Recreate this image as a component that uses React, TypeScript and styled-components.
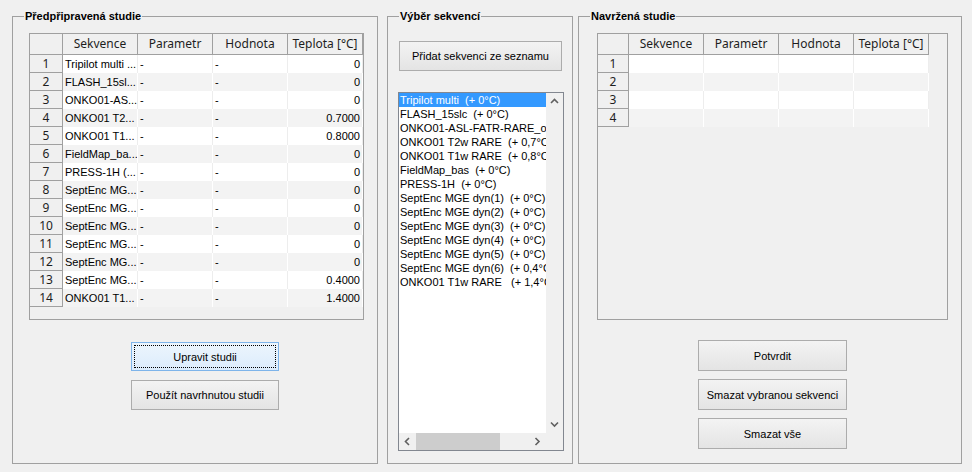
import React from 'react';
import styled, { createGlobalStyle, css } from 'styled-components';

// Základní styl okna (Windows 7 vzhled)
const GlobalStyle = createGlobalStyle`
  html, body {
    margin: 0;
    height: 100%;
    overflow: hidden;
  }
  body {
    background: #f0f0f0;
    font-family: "Liberation Sans", Arial, sans-serif;
    font-size: 11px;
    color: #000;
  }
`;

const Window = styled.div`
  display: flex;
  align-items: flex-start;
  padding: 9px 0 0 12px;
`;

const GroupBox = styled.fieldset<{ $width: number; $gap?: number }>`
  box-sizing: border-box;
  width: ${({ $width }) => $width}px;
  height: 455px;
  margin: 0 ${({ $gap }) => $gap ?? 0}px 0 0;
  padding: 0;
  min-width: 0;
  border: 1px solid #a0a0a0;
`;

const Legend = styled.legend`
  margin-left: 11px;
  padding: 0 1px;
  font-weight: bold;
  font-size: 11px;
  line-height: 14px;
`;

const Body = styled.div<{ $top: number; $left: number }>`
  display: flex;
  flex-direction: column;
  align-items: flex-start;
  padding: ${({ $top, $left }) => `${$top}px 0 0 ${$left}px`};
`;

const ButtonStack = styled.div<{ $top: number; $left: number; $gap: number }>`
  display: flex;
  flex-direction: column;
  gap: ${({ $gap }) => $gap}px;
  margin: ${({ $top, $left }) => `${$top}px 0 0 ${$left}px`};
`;

const Button = styled.button<{ $w: number; $h: number; $focused?: boolean }>`
  position: relative;
  box-sizing: border-box;
  width: ${({ $w }) => $w}px;
  height: ${({ $h }) => $h}px;
  padding: 0;
  border: 1px solid #acacac;
  border-radius: 0;
  background: linear-gradient(to bottom, #f3f3f3, #e4e4e4);
  font-family: "Liberation Sans", Arial, sans-serif;
  font-size: 11px;
  color: #000;
  ${({ $focused }) =>
    $focused &&
    css`
      border-color: #7eb4ea;
      background: linear-gradient(to bottom, #ecf5fd, #dcecfc);
      &::after {
        content: '';
        position: absolute;
        inset: 2px;
        border: 1px dotted #000;
      }
    `}
`;

// ---------- tabulka ----------

const Table = styled.div<{ $w: number }>`
  box-sizing: border-box;
  width: ${({ $w }) => $w}px;
  height: 287px;
  border: 1px solid #a0a0a0;
  background: #f0f0f0;
  overflow: hidden;
`;

const Row = styled.div`
  display: flex;
`;

const HeadCell = styled.div<{ $w: number }>`
  box-sizing: border-box;
  width: ${({ $w }) => $w}px;
  height: 21px;
  line-height: 20px;
  border-right: 1px solid #a0a0a0;
  border-bottom: 1px solid #a0a0a0;
  text-align: center;
  font-family: "Noto Sans", "Liberation Sans", sans-serif;
  font-size: 12px;
  color: #1e1e1e;
  white-space: nowrap;
`;

const RowHead = styled.div<{ $w: number }>`
  box-sizing: border-box;
  width: ${({ $w }) => $w}px;
  height: 18px;
  line-height: 18px;
  border-right: 1px solid #a0a0a0;
  border-bottom: 1px solid #a0a0a0;
  text-align: center;
  font-family: "Noto Sans", "Liberation Sans", sans-serif;
  font-size: 12px;
  color: #1e1e1e;
`;

const Cell = styled.div<{ $w: number; $alt: boolean; $right?: boolean }>`
  box-sizing: border-box;
  width: ${({ $w }) => $w}px;
  height: 18px;
  line-height: 18px;
  padding: 0 2px;
  background: ${({ $alt }) => ($alt ? '#f3f3f3' : '#ffffff')};
  border-right: 1px solid ${({ $alt }) => ($alt ? '#ffffff' : '#ededed')};
  text-align: ${({ $right }) => ($right ? 'right' : 'left')};
  white-space: nowrap;
  overflow: hidden;
`;

const columns = ['Sekvence', 'Parametr', 'Hodnota', 'Teplota [°C]'];

interface StudyTableProps {
  width: number;
  headWidth: number;
  rows: string[][];
}

const StudyTable: React.FC<StudyTableProps> = ({ width, headWidth, rows }) => (
  <Table $w={width}>
    <Row>
      <HeadCell $w={headWidth} />
      {columns.map((c) => (
        <HeadCell key={c} $w={75}>
          {c}
        </HeadCell>
      ))}
    </Row>
    {rows.map((r, i) => (
      <Row key={i}>
        <RowHead $w={headWidth}>{i + 1}</RowHead>
        {r.map((v, j) => (
          <Cell key={j} $w={75} $alt={i % 2 === 1} $right={j === 3}>
            {v}
          </Cell>
        ))}
      </Row>
    ))}
  </Table>
);

const prepared: [string, string][] = [
  ['Tripilot multi  ...', '0'],
  ['FLASH_15sl...', '0'],
  ['ONKO01-AS...', '0'],
  ['ONKO01 T2...', '0.7000'],
  ['ONKO01 T1...', '0.8000'],
  ['FieldMap_ba...', '0'],
  ['PRESS-1H  (...', '0'],
  ['SeptEnc MG...', '0'],
  ['SeptEnc MG...', '0'],
  ['SeptEnc MG...', '0'],
  ['SeptEnc MG...', '0'],
  ['SeptEnc MG...', '0'],
  ['SeptEnc MG...', '0.4000'],
  ['ONKO01 T1...', '1.4000'],
];

// ---------- seznam sekvencí ----------

const ListBox = styled.div`
  box-sizing: border-box;
  width: 166px;
  height: 359px;
  margin: 21px 0 0 -1px;
  border: 1px solid #828790;
  background: #fff;
  display: grid;
  grid-template-columns: 1fr 17px;
  grid-template-rows: 1fr 17px;
`;

const Items = styled.div`
  overflow: hidden;
`;

const Item = styled.div<{ $selected?: boolean }>`
  height: 14px;
  line-height: 14px;
  padding-left: 1px;
  white-space: pre;
  background: ${({ $selected }) => ($selected ? '#3399ff' : 'transparent')};
  color: ${({ $selected }) => ($selected ? '#fff' : '#000')};
`;

const VScroll = styled.div`
  background: #f0f0f0;
  display: flex;
  flex-direction: column;
  justify-content: space-between;
`;

const HScroll = styled.div`
  background: #f0f0f0;
  display: flex;
`;

const Corner = styled.div`
  background: #f0f0f0;
`;

const ArrowBox = styled.div`
  width: 17px;
  height: 17px;
  display: flex;
  align-items: center;
  justify-content: center;
  flex: none;
`;

const Thumb = styled.div`
  width: 84px;
  background: #cdcdcd;
`;

const Track = styled.div`
  flex: 1;
`;

const Chevron: React.FC<{ dir: 'up' | 'down' | 'left' | 'right' }> = ({ dir }) => {
  const pts = {
    up: '1,5 4.5,1.5 8,5',
    down: '1,1.5 4.5,5 8,1.5',
    left: '5,1 1.5,4.5 5,8',
    right: '1.5,1 5,4.5 1.5,8',
  }[dir];
  const vertical = dir === 'up' || dir === 'down';
  return (
    <ArrowBox>
      <svg width={vertical ? 9 : 7} height={vertical ? 7 : 9} viewBox={vertical ? '0 0 9 7' : '0 0 7 9'}>
        <polyline points={pts} fill="none" stroke="#606060" strokeWidth="1.6" />
      </svg>
    </ArrowBox>
  );
};

const sequences = [
  'Tripilot multi  (+ 0°C)',
  'FLASH_15slc  (+ 0°C)',
  'ONKO01-ASL-FATR-RARE_optim  (+ 0°C)',
  'ONKO01 T2w RARE  (+ 0,7°C)',
  'ONKO01 T1w RARE  (+ 0,8°C)',
  'FieldMap_bas  (+ 0°C)',
  'PRESS-1H  (+ 0°C)',
  'SeptEnc MGE dyn(1)  (+ 0°C)',
  'SeptEnc MGE dyn(2)  (+ 0°C)',
  'SeptEnc MGE dyn(3)  (+ 0°C)',
  'SeptEnc MGE dyn(4)  (+ 0°C)',
  'SeptEnc MGE dyn(5)  (+ 0°C)',
  'SeptEnc MGE dyn(6)  (+ 0,4°C)',
  'ONKO01 T1w RARE   (+ 1,4°C)',
];

const App: React.FC = () => (
  <>
    <GlobalStyle />
    <Window>
      <GroupBox $width={366} $gap={9}>
        <Legend>Předpřipravená studie</Legend>
        <Body $top={10} $left={16}>
          <StudyTable width={335} headWidth={33} rows={prepared.map(([s, t]) => [s, '-', '-', t])} />
          <ButtonStack $top={22} $left={102} $gap={9}>
            <Button $w={148} $h={29} $focused>
              Upravit studii
            </Button>
            <Button $w={148} $h={30}>
              Použít navrhnutou studii
            </Button>
          </ButtonStack>
        </Body>
      </GroupBox>

      <GroupBox $width={186} $gap={5}>
        <Legend>Výběr sekvencí</Legend>
        <Body $top={18} $left={11}>
          <Button $w={163} $h={30}>
            Přidat sekvenci ze seznamu
          </Button>
          <ListBox>
            <Items>
              {sequences.map((s, i) => (
                <Item key={i} $selected={i === 0}>
                  {s}
                </Item>
              ))}
            </Items>
            <VScroll>
              <Chevron dir="up" />
              <Chevron dir="down" />
            </VScroll>
            <HScroll>
              <Chevron dir="left" />
              <Thumb />
              <Track />
              <Chevron dir="right" />
            </HScroll>
            <Corner />
          </ListBox>
        </Body>
      </GroupBox>

      <GroupBox $width={384}>
        <Legend>Navržená studie</Legend>
        <Body $top={10} $left={18}>
          <StudyTable width={351} headWidth={31} rows={[0, 1, 2, 3].map(() => ['', '', '', ''])} />
          <ButtonStack $top={20} $left={101} $gap={8}>
            <Button $w={149} $h={31}>
              Potvrdit
            </Button>
            <Button $w={149} $h={31}>
              Smazat vybranou sekvenci
            </Button>
            <Button $w={149} $h={31}>
              Smazat vše
            </Button>
          </ButtonStack>
        </Body>
      </GroupBox>
    </Window>
  </>
);

export default App;
